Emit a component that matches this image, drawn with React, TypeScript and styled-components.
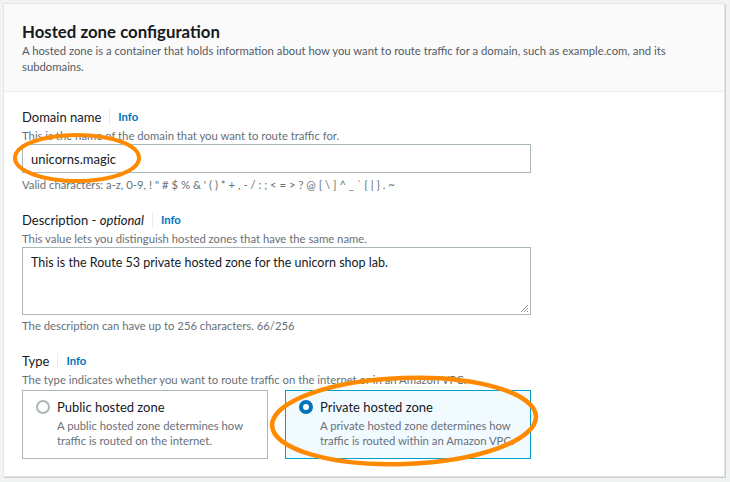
import React from "react";
import styled, { createGlobalStyle } from "styled-components";

const Global = createGlobalStyle`
  html, body { margin: 0; padding: 0; background: #f2f3f3; }
  body { font-family: Lato, "Liberation Sans", Arial, sans-serif; color: #16191f; }
  * { box-sizing: border-box; }
`;

const Page = styled.div`
  position: relative;
  width: 730px;
  height: 482px;
  padding: 3px 5px 0 3px;
  overflow: hidden;
`;

const Card = styled.section`
  background: #fff;
  border: 1px solid #e3e7e7;
  box-shadow: 1px 1px 0 #c9cfcf;
  width: 722px;
`;

const Header = styled.header`
  background: #fafafa;
  border-bottom: 1px solid #eaeded;
  padding: 17px 20px 16px 18px;
`;

const Title = styled.h2`
  margin: 0;
  font-size: 16.8px;
  line-height: 22px;
  font-weight: 700;
  color: #16191f;
`;

const HeaderDesc = styled.p`
  margin: 0;
  font-size: 11.3px;
  line-height: 16px;
  color: #545b64;
  max-width: 650px;
`;

const Body = styled.div`
  padding: 14px 20px 17px 18px;
  display: flex;
  flex-direction: column;
  gap: 16px;
`;

const Field = styled.div`
  display: flex;
  flex-direction: column;
`;

const LabelRow = styled.div`
  display: flex;
  align-items: center;
  height: 22px;
`;

const Label = styled.span`
  font-size: 13px;
  color: #16191f;
  em { font-style: italic; }
`;

const InfoLink = styled.a`
  font-size: 11.3px;
  font-weight: 700;
  color: #0073bb;
  margin-left: 8px;
  padding-left: 8px;
  border-left: 1px solid #eaeded;
  line-height: 16px;
`;

const Help = styled.div<{ $mt?: number }>`
  font-size: 11.3px;
  line-height: 16px;
  color: #687078;
  white-space: nowrap;
  margin-top: ${(p) => p.$mt ?? 0}px;
`;

const Input = styled.div`
  width: 509px;
  height: 29px;
  border: 1px solid #aab7b8;
  padding: 0 8px;
  display: flex;
  align-items: center;
  font-size: 13px;
  color: #16191f;
`;

const TextArea = styled.div`
  position: relative;
  width: 509px;
  height: 68px;
  border: 1px solid #aab7b8;
  padding: 5px 8px;
  font-size: 12.5px;
  line-height: 20px;
  color: #16191f;
`;

const Grip = styled.svg`
  position: absolute;
  right: 1px;
  bottom: 1px;
`;

const Tiles = styled.div`
  display: grid;
  grid-template-columns: 246px 246px;
  column-gap: 17px;
  margin-top: 2px;
`;

const Tile = styled.div<{ $selected?: boolean }>`
  height: 69px;
  border: 1px solid ${(p) => (p.$selected ? "#00a1c9" : "#aab7b8")};
  background: ${(p) => (p.$selected ? "#f1faff" : "#fff")};
  padding: 5px 12px 0 13px;
  display: flex;
  gap: 7px;
`;

const Radio = styled.span<{ $checked?: boolean }>`
  flex: none;
  width: 14px;
  height: 14px;
  margin-top: 4px;
  border-radius: 50%;
  border: ${(p) => (p.$checked ? "4px solid #0073bb" : "2px solid #aab7b8")};
  background: #fff;
`;

const TileText = styled.div`
  display: flex;
  flex-direction: column;
  white-space: nowrap;
`;

const TileTitle = styled.div`
  font-size: 13px;
  line-height: 22px;
  color: #16191f;
`;

const TileDesc = styled.div`
  font-size: 11.3px;
  line-height: 15px;
  color: #687078;
`;

const Annotation = styled.svg`
  position: absolute;
  left: 0;
  top: 0;
  pointer-events: none;
`;

export default function App() {
  return (
    <>
      <Global />
      <Page>
        <Card>
          <Header>
            <Title>Hosted zone configuration</Title>
            <HeaderDesc>
              A hosted zone is a container that holds information about how you want to route traffic for a
              domain, such as example.com, and its subdomains.
            </HeaderDesc>
          </Header>
          <Body>
            <Field>
              <LabelRow>
                <Label>Domain name</Label>
                <InfoLink>Info</InfoLink>
              </LabelRow>
              <Help>This is the name of the domain that you want to route traffic for.</Help>
              <Input>unicorns.magic</Input>
              <Help $mt={4}>
                Valid characters: a-z, 0-9, ! " # $ % &amp; ' ( ) * + , - / : ; &lt; = &gt; ? @ [ \ ] ^ _ ` {"{"} | {"}"} . ~
              </Help>
            </Field>
            <Field>
              <LabelRow>
                <Label>
                  Description - <em>optional</em>
                </Label>
                <InfoLink>Info</InfoLink>
              </LabelRow>
              <Help>This value lets you distinguish hosted zones that have the same name.</Help>
              <TextArea>
                This is the Route 53 private hosted zone for the unicorn shop lab.
                <Grip width="9" height="9" viewBox="0 0 9 9">
                  <path d="M8 1L1 8M8 4L4 8M8 7L7 8" stroke="#879596" strokeWidth="1" />
                </Grip>
              </TextArea>
              <Help $mt={3}>The description can have up to 256 characters. 66/256</Help>
            </Field>
            <Field>
              <LabelRow>
                <Label>Type</Label>
                <InfoLink>Info</InfoLink>
              </LabelRow>
              <Help>The type indicates whether you want to route traffic on the internet or in an Amazon VPC.</Help>
              <Tiles>
                <Tile>
                  <Radio />
                  <TileText>
                    <TileTitle>Public hosted zone</TileTitle>
                    <TileDesc>
                      A public hosted zone determines how
                      <br />
                      traffic is routed on the internet.
                    </TileDesc>
                  </TileText>
                </Tile>
                <Tile $selected>
                  <Radio $checked />
                  <TileText>
                    <TileTitle>Private hosted zone</TileTitle>
                    <TileDesc>
                      A private hosted zone determines how
                      <br />
                      traffic is routed within an Amazon VPC.
                    </TileDesc>
                  </TileText>
                </Tile>
              </Tiles>
            </Field>
          </Body>
        </Card>
        <Annotation width="730" height="482" viewBox="0 0 730 482">
          <ellipse cx="77" cy="158" rx="62" ry="23" fill="none" stroke="#ff8a00" strokeWidth="4" />
          <ellipse cx="404" cy="421" rx="132" ry="43" fill="none" stroke="#ff8a00" strokeWidth="4.5" transform="rotate(-2 404 421)" />
        </Annotation>
      </Page>
    </>
  );
}
